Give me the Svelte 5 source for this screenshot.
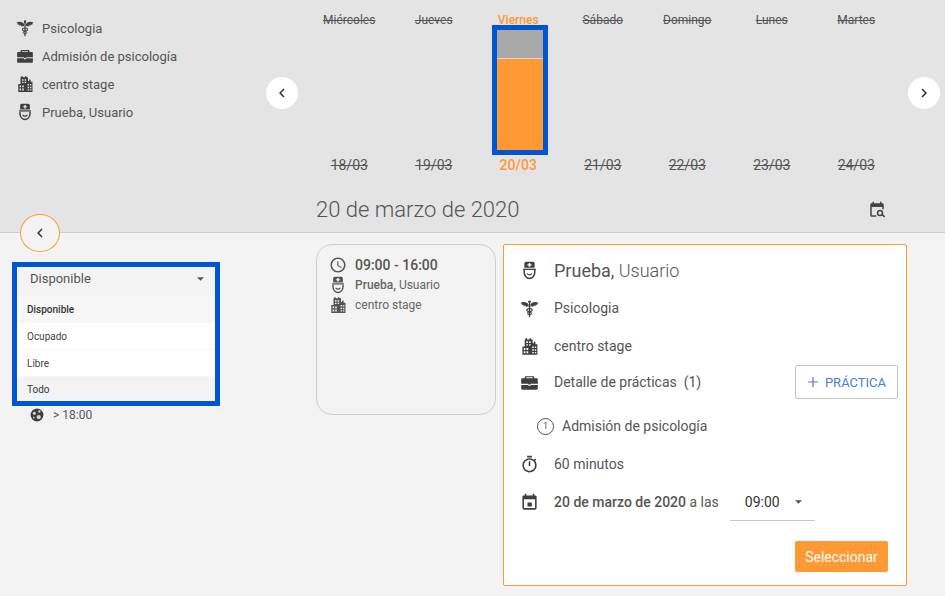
<script>
  const days = [
    { name: "Miércoles", date: "18/03" },
    { name: "Jueves", date: "19/03" },
    { name: "Viernes", date: "20/03", active: true },
    { name: "Sábado", date: "21/03" },
    { name: "Domingo", date: "22/03" },
    { name: "Lunes", date: "23/03" },
    { name: "Martes", date: "24/03" }
  ];

  const options = ["Disponible", "Ocupado", "Libre", "Todo"];
</script>

{#snippet caduceus()}
  <svg viewBox="0 0 24 24" class="icon">
    <path d="M10.800 6.500C8 3.500 4 3 .5 5l2 1.200-.5 1.300 2.300-.3.2 1.800 2.300-.8.7 2 2.200-1.200 1.100 1.200z"/>
    <path d="M13.200 6.500C16 3.500 20 3 23.500 5l-2 1.200.5 1.300-2.300-.3-.2 1.800-2.300-.8-.7 2-2.200-1.200-1.100 1.200z"/>
    <circle cx="12" cy="3.500" r="1.700"/>
    <path d="M11.200 4h1.600v19h-1.600z"/>
    <ellipse cx="12" cy="14" rx="3.400" ry="1.900" fill="none" stroke="currentColor" stroke-width="1.400"/>
    <ellipse cx="12" cy="18" rx="2.400" ry="1.700" fill="none" stroke="currentColor" stroke-width="1.300"/>
  </svg>
{/snippet}

{#snippet briefcase()}
  <svg viewBox="0 0 24 24" class="icon">
    <path fill-rule="evenodd" d="M6 6.500V5.500C6 4.700 6.700 4 7.500 4h9c.8 0 1.500.7 1.500 1.500v1h3c1 0 1.500.7 1.500 1.500v5.500h-21V8c0-.8.5-1.500 1.500-1.500h3zm2 0h8v-1H8v1z"/>
    <path d="M1.500 15h9v1.200h3V15h9v4.500c0 .8-.5 1.500-1.500 1.500H3c-1 0-1.500-.7-1.500-1.500V15z"/>
    <path d="M10.500 12h3v2.500h-3z"/>
  </svg>
{/snippet}

{#snippet building()}
  <svg viewBox="0 0 24 24" class="icon">
    <path fill-rule="evenodd" d="M7 1.500h2V3h3V1.500h2V3h2v5h1.500V6h2v3H22v13.500H3V12h3V3h1V1.500zM8 5.500v2h2v-2H8zm3.500 0v2h2v-2h-2zM8 9v1.800h2V9H8zm3.500 0v1.800h2V9h-2zM4.800 14v2.300H6.800V14H4.800zm3.400 0v2.300h2.200V14H8.200zM4.800 18v2.500H6.800V18H4.800zm3.400 0v2.500h2.200V18H8.200zm7.300-6v2h2v-2h-2zm3.300 0v2h1.700v-2h-1.700zM15.500 15.500v2h2v-2h-2zm3.300 0v2h1.700v-2h-1.700zM15.500 19v1.500h2V19h-2zm3.300 0v1.500h1.700V19h-1.700z"/>
  </svg>
{/snippet}

{#snippet doctor()}
  <svg viewBox="0 0 24 24" class="icon">
    <path fill-rule="evenodd" d="M5.500 3.200C5.500 2 6.500 1 7.700 1h8.600c1.200 0 2.200 1 2.200 2.200V8.500h-13V3.200zM11 2.600v1.600H9.400v1.600H11v1.600h2V5.800h1.600V4.200H13V2.600h-2z"/>
    <path d="M4 9.700h16v1.700H4z"/>
    <path d="M5.300 11.500v2.700c0 4.600 3.300 7.800 6.700 7.800s6.700-3.200 6.700-7.800v-2.700" fill="none" stroke="currentColor" stroke-width="1.900"/>
    <path d="M8.800 16c1.800 1.700 4.600 1.700 6.400 0" fill="none" stroke="currentColor" stroke-width="1.500"/>
  </svg>
{/snippet}

{#snippet chevron(right)}
  <svg viewBox="0 0 24 24" class="chev" class:flip={right}>
    <path d="M15.410 7.410L14 6l-6 6 6 6 1.410-1.410L10.830 12z"/>
  </svg>
{/snippet}

{#snippet caret()}
  <svg viewBox="0 0 10 5" class="caret"><path d="M0 0h10L5 5z"/></svg>
{/snippet}

<div class="page">
  <header class="top">
    <div class="top-row">
      <ul class="summary">
        <li>{@render caduceus()}<span>Psicologia</span></li>
        <li>{@render briefcase()}<span>Admisión de psicología</span></li>
        <li>{@render building()}<span>centro stage</span></li>
        <li>{@render doctor()}<span>Prueba, Usuario</span></li>
      </ul>

      <button class="round prev">{@render chevron(false)}</button>

      <div class="days">
        {#each days as day}
          <div class="day" class:active={day.active}>
            <div class="day-name">{day.name}</div>
            <div class="bar-slot">
              {#if day.active}
                <div class="bar">
                  <div class="bar-free"></div>
                  <div class="bar-used"></div>
                </div>
              {/if}
            </div>
            <div class="day-date">{day.date}</div>
          </div>
        {/each}
      </div>

      <button class="round next">{@render chevron(true)}</button>
    </div>

    <div class="title-row">
      <h1>20 de marzo de 2020</h1>
      <svg viewBox="0 0 24 24" class="search-date">
        <path d="M19 3h-1V1h-2v2H8V1H6v2H5C3.900 3 3 3.900 3 5v14c0 1.100.9 2 2 2h6v-2H5V8h14v3h2V5c0-1.100-.9-2-2-2z"/>
        <circle cx="16" cy="16" r="3.300" fill="none" stroke="#444" stroke-width="2"/>
        <path d="M18 18.500l1.500-1.500 3.500 3.500-1.500 1.500z"/>
      </svg>
    </div>
  </header>

  <button class="back">{@render chevron(false)}</button>

  <main class="content">
    <aside class="filters">
      <div class="dropdown">
        <div class="dropdown-head">
          <span>Disponible</span>
          {@render caret()}
        </div>
        {#each options as option, i}
          <div class="option" class:selected={i === 0} class:hovered={i === 3}>{option}</div>
        {/each}
      </div>
      <div class="slot-time">
        <svg viewBox="0 0 24 24" class="globe">
          <circle cx="12" cy="12" r="11"/>
          <g class="blotch">
            <circle cx="7.500" cy="9" r="2.600"/>
            <circle cx="16" cy="6" r="2"/>
            <circle cx="15" cy="15.500" r="3.600"/>
            <circle cx="6.500" cy="16.500" r="1.400"/>
          </g>
        </svg>
        <span>&gt; 18:00</span>
      </div>
    </aside>

    <section class="slot-card">
      <div class="slot-row hours">
        <svg viewBox="0 0 24 24" class="icon"><path d="M11.990 2C6.470 2 2 6.480 2 12s4.470 10 9.990 10C17.520 22 22 17.520 22 12S17.520 2 11.990 2zM12 20c-4.420 0-8-3.580-8-8s3.580-8 8-8 8 3.580 8 8-3.580 8-8 8zm.5-13H11v6l5.250 3.150.75-1.230-4.500-2.670z"/></svg>
        <span>09:00 - 16:00</span>
      </div>
      <div class="slot-row">{@render doctor()}<span><b>Prueba,</b> Usuario</span></div>
      <div class="slot-row">{@render building()}<span>centro stage</span></div>
    </section>

    <section class="detail">
      <div class="row name">{@render doctor()}<span><b>Prueba,</b> Usuario</span></div>
      <div class="row">{@render caduceus()}<span>Psicologia</span></div>
      <div class="row">{@render building()}<span>centro stage</span></div>
      <div class="row short">
        {@render briefcase()}
        <span>Detalle de prácticas&nbsp; (1)</span>
        <button class="add">
          <svg viewBox="0 0 12 12" class="plus"><path d="M6 1v10M1 6h10"/></svg>
          PRÁCTICA
        </button>
      </div>
      <div class="row practice">
        <span class="count">1</span>
        <span>Admisión de psicología</span>
      </div>
      <div class="row">
        <svg viewBox="0 0 24 24" class="icon"><path d="M15 1H9v2h6V1zm-4 13h2V8h-2v6zm8.030-6.610l1.420-1.420c-.43-.51-.9-.99-1.410-1.410l-1.420 1.420C16.070 4.740 14.120 4 12 4c-4.970 0-9 4.030-9 9s4.020 9 9 9 9-4.030 9-9c0-2.120-.74-4.070-1.970-5.610zM12 20c-3.870 0-7-3.130-7-7s3.130-7 7-7 7 3.130 7 7-3.130 7-7 7z"/></svg>
        <span>60 minutos</span>
      </div>
      <div class="row">
        <svg viewBox="0 0 24 24" class="icon"><path d="M15 12H9.500v5H15v-5zM16 1v2H8V1H6v2H5c-1.110 0-1.990.9-1.990 2L3 19c0 1.100.89 2 2 2h14c1.100 0 2-.9 2-2V5c0-1.100-.9-2-2-2h-1V1h-2zm3 18H5V8h14v11z"/></svg>
        <span><b>20 de marzo de 2020</b> a las</span>
        <div class="time-select">
          <span>09:00</span>
          {@render caret()}
        </div>
      </div>
      <div class="actions">
        <button class="choose">Seleccionar</button>
      </div>
    </section>
  </main>
</div>

<style>
  :global(body) {
    margin: 0;
    background: #f3f3f3;
  }

  .page {
    position: relative;
    width: 945px;
    height: 596px;
    overflow: hidden;
    background: #f3f3f3;
    font-family: Roboto, "Liberation Sans", sans-serif;
    color: #555;
  }

  button {
    font-family: inherit;
    cursor: pointer;
  }

  .icon {
    flex: none;
    width: 20px;
    height: 20px;
    fill: #3f3f3f;
    color: #3f3f3f;
  }

  /* top band */
  .top {
    height: 232px;
    background: #e4e4e4;
    border-bottom: 1px solid #cfcfcf;
  }

  .top-row {
    display: flex;
    height: 190px;
  }

  .summary {
    flex: none;
    width: 266px;
    margin: 0;
    padding: 14px 0 0 16px;
    box-sizing: border-box;
    list-style: none;
    font-size: 13px;
  }

  .summary li {
    display: flex;
    align-items: center;
    gap: 8px;
    height: 28px;
  }

  .summary .icon {
    width: 18px;
    height: 18px;
  }

  .round {
    flex: none;
    display: flex;
    align-items: center;
    justify-content: center;
    width: 32px;
    height: 32px;
    margin-top: 77px;
    padding: 0;
    border: 0;
    border-radius: 50%;
    background: #fff;
  }

  .chev {
    width: 18px;
    height: 18px;
    fill: #333;
  }

  .chev.flip {
    transform: scaleX(-1);
  }

  .days {
    flex: none;
    display: grid;
    grid-template-columns: repeat(7, 84.5px);
    margin: 0 9.500px 0 9px;
  }

  .day {
    display: flex;
    flex-direction: column;
    align-items: center;
    padding-top: 15px;
    color: #555;
    text-decoration: line-through;
  }

  .day.active {
    color: #ff9933;
    font-weight: 500;
    text-decoration: none;
  }

  .day-name {
    height: 10px;
    font-size: 12px;
    line-height: 10px;
  }

  .bar-slot {
    height: 130px;
  }

  .bar {
    display: flex;
    flex-direction: column;
    box-sizing: border-box;
    width: 56px;
    height: 130px;
    margin-left: 4px;
    border: 5px solid #0056d2;
  }

  .bar-free {
    height: 28px;
    background: #a9a9a9;
    border-bottom: 1px solid #d6d6d6;
  }

  .bar-used {
    flex: 1;
    background: #ff9933;
  }

  .day-date {
    font-size: 14px;
    line-height: 20px;
  }

  .title-row {
    display: flex;
    align-items: center;
    justify-content: space-between;
    height: 38px;
    padding: 0 59px 0 316px;
  }

  h1 {
    margin: 0;
    font-size: 22px;
    font-weight: 300;
    color: #555;
  }

  .search-date {
    width: 18px;
    height: 18px;
    fill: #444;
    margin-top: 2px;
  }

  .back {
    position: absolute;
    left: 20px;
    top: 214px;
    display: flex;
    align-items: center;
    justify-content: center;
    box-sizing: border-box;
    width: 40px;
    height: 38px;
    padding: 0;
    border: 1px solid #ff9933;
    border-radius: 50%;
    background: #f3f3f3;
  }

  /* body */
  .content {
    display: grid;
    grid-template-columns: 304px 180px 404px;
    padding: 11px 0 0 12px;
  }

  .filters {
    padding-top: 18px;
  }

  .dropdown {
    box-sizing: border-box;
    width: 208px;
    height: 144px;
    border: 5px solid #0056d2;
    background: #fff;
    font-size: 10px;
    color: #444;
  }

  .dropdown-head {
    display: flex;
    align-items: center;
    justify-content: space-between;
    box-sizing: border-box;
    height: 29px;
    padding: 0 11px 6px 13px;
    background: #f3f3f3;
    font-size: 13px;
    color: #555;
  }

  .caret {
    flex: none;
    width: 7px;
    height: 4px;
    fill: #555;
  }

  .option {
    display: flex;
    align-items: center;
    height: 27px;
    padding: 1px 0 0 10px;
    border-bottom: 1px solid #f7f7f7;
    box-sizing: border-box;
  }

  .option.selected {
    padding-top: 0;
    background: #f7f7f7;
    font-weight: 500;
    color: #333;
  }

  .option.hovered {
    height: 24px;
    background: #f3f3f3;
    color: #333;
    border: 0;
  }

  .slot-time {
    display: flex;
    align-items: center;
    gap: 9px;
    height: 18px;
    padding-left: 18px;
    font-size: 12px;
  }

  .globe {
    width: 14px;
    height: 14px;
    fill: #3f3f3f;
  }

  .blotch {
    fill: #d8d8d8;
  }

  .slot-card {
    box-sizing: border-box;
    height: 171px;
    padding: 10px 0 0 12px;
    border: 1px solid #cfcfcf;
    border-radius: 16px;
    font-size: 12px;
    color: #666;
  }

  .slot-row {
    display: flex;
    align-items: center;
    gap: 8px;
    height: 20px;
  }

  .slot-row .icon {
    width: 18px;
    height: 18px;
    fill: #555;
    color: #555;
  }

  .slot-row b,
  .detail b {
    font-weight: 500;
  }

  .hours {
    font-size: 14px;
    font-weight: 500;
    color: #555;
  }

  .detail {
    grid-column: 3;
    box-sizing: border-box;
    width: 404px;
    height: 342px;
    margin-left: 7px;
    padding: 8px 8px 0 16px;
    background: #fff;
    border: 1px solid #ff9933;
    border-radius: 2px;
    font-size: 14px;
    color: #555;
  }

  .row {
    display: flex;
    align-items: center;
    gap: 15px;
    height: 38px;
  }

  .row .icon {
    width: 19px;
    height: 19px;
  }

  .name {
    height: 34px;
    margin-bottom: 2px;
    font-size: 18px;
    font-weight: 300;
  }

  .name b {
    font-weight: 400;
  }

  .short {
    height: 34px;
  }

  .practice {
    gap: 8px;
    margin-top: 8px;
    padding-left: 17px;
  }

  .count {
    display: flex;
    align-items: center;
    justify-content: center;
    box-sizing: border-box;
    width: 17px;
    height: 17px;
    border: 1px solid #555;
    border-radius: 50%;
    font-size: 9px;
  }

  .add {
    display: flex;
    align-items: center;
    justify-content: center;
    gap: 6px;
    box-sizing: border-box;
    width: 103px;
    height: 34px;
    margin-left: auto;
    padding: 0;
    border: 1px solid #c4c4c4;
    border-radius: 2px;
    background: #fff;
    font-size: 13px;
    color: #4a7fd0;
  }

  .plus {
    width: 12px;
    height: 12px;
    fill: none;
    stroke: #4a7fd0;
    stroke-width: 1.200;
  }

  .time-select {
    display: flex;
    align-items: center;
    justify-content: space-between;
    box-sizing: border-box;
    width: 85px;
    height: 38px;
    margin-left: -4px;
    padding: 0 13px 0 15px;
    border-bottom: 1px solid #c8c8c8;
    font-size: 14px;
    color: #333;
  }

  .actions {
    display: flex;
    justify-content: flex-end;
    margin: 20px 10px 0 0;
  }

  .choose {
    width: 93px;
    height: 31px;
    padding: 0;
    border: 0;
    border-radius: 2px;
    background: #ff9933;
    font-size: 14px;
    color: #fff;
  }
</style>
